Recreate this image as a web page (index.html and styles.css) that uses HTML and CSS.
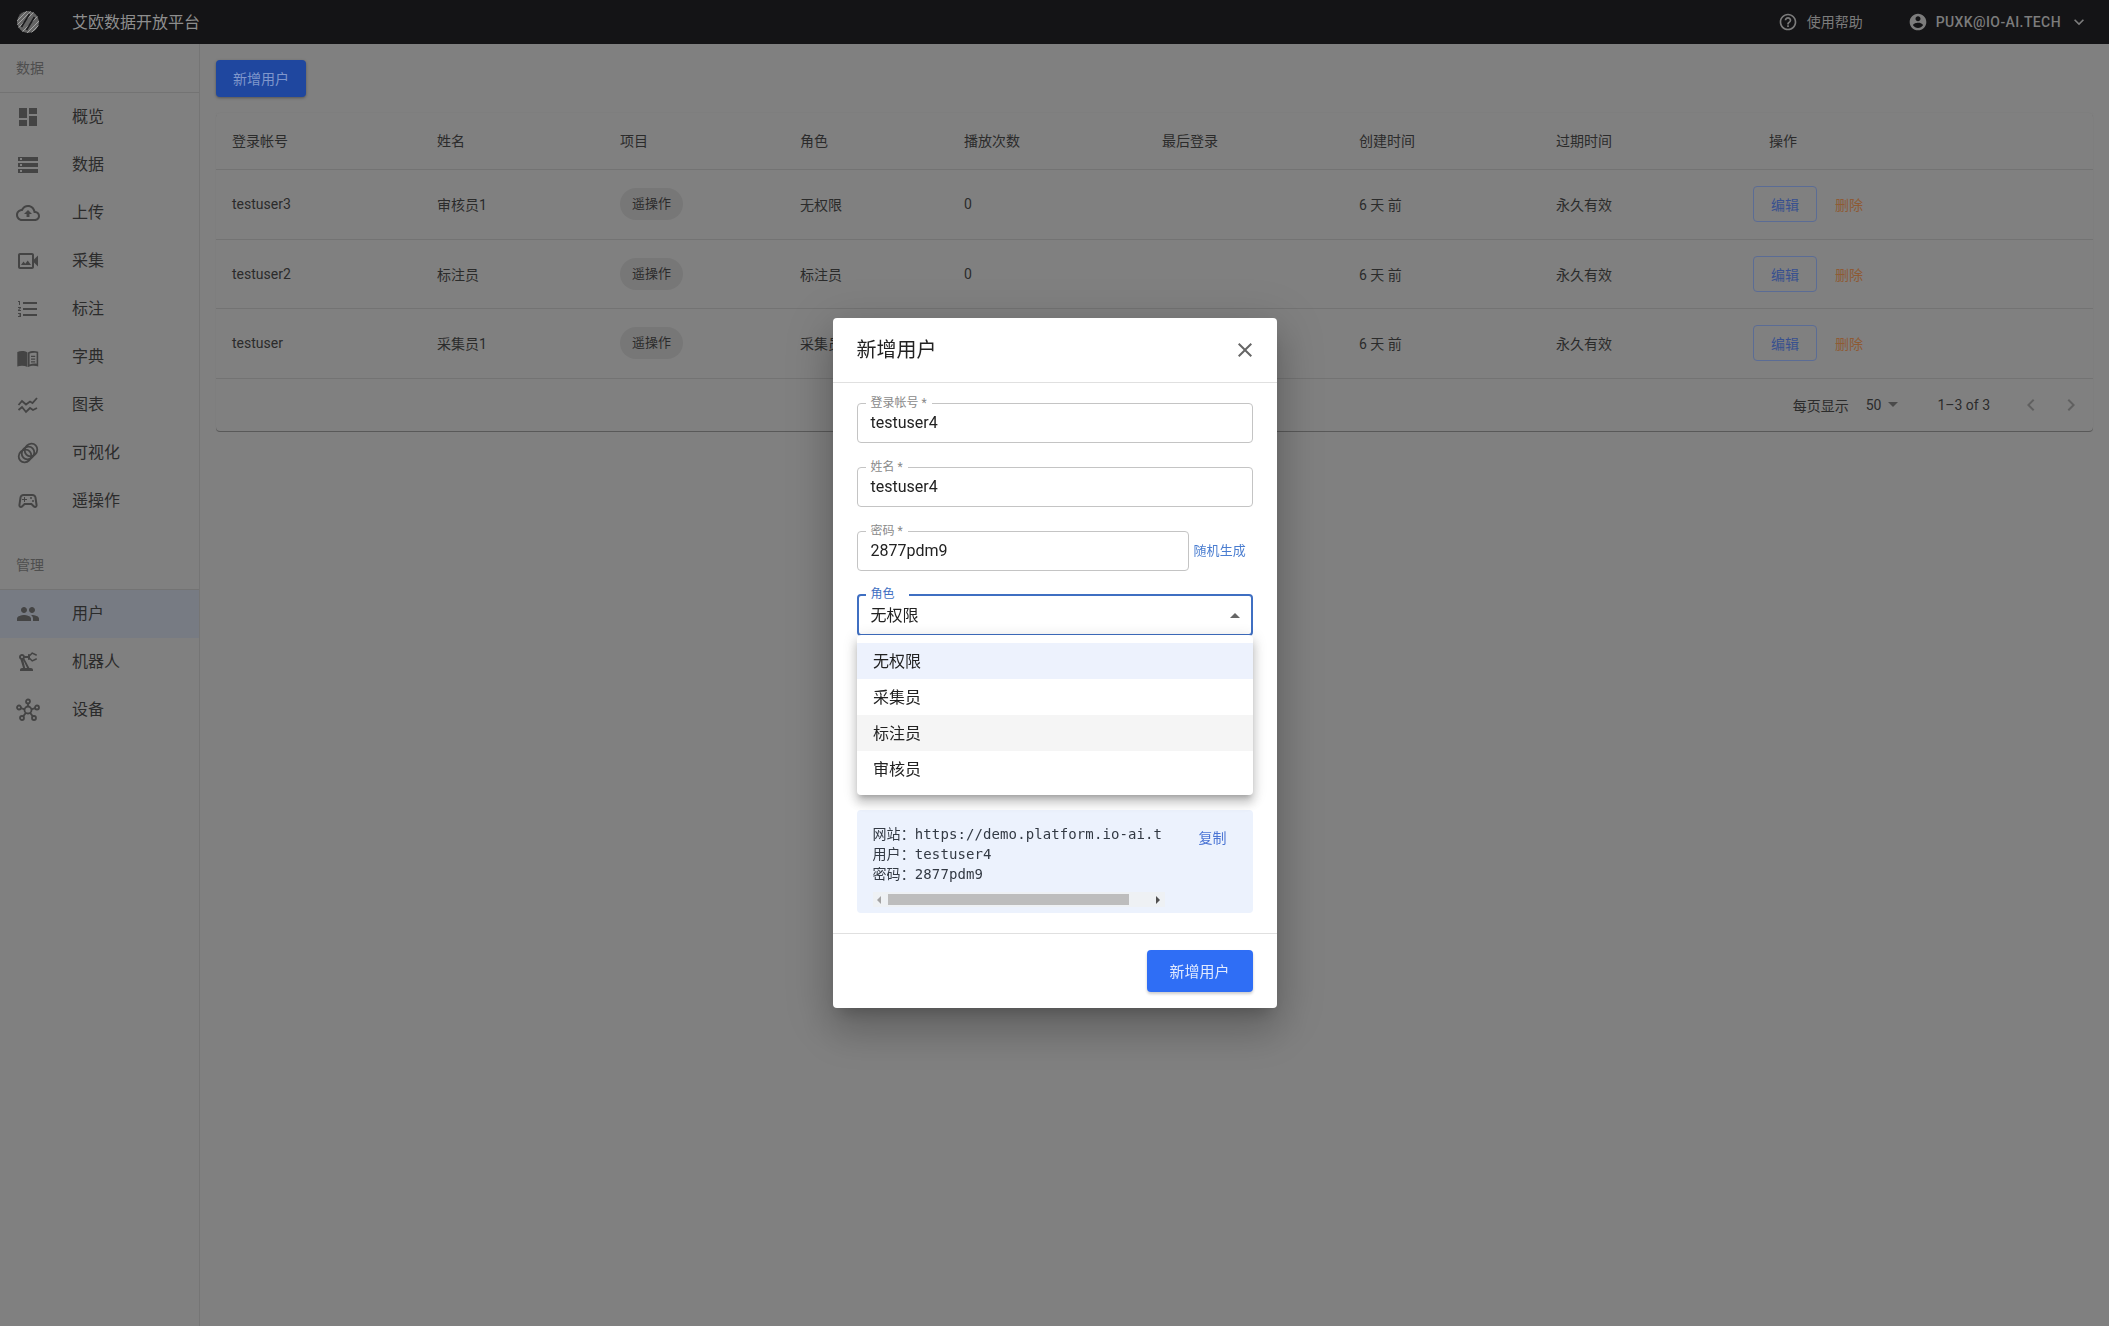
FILE: index.html
```html
<!DOCTYPE html>
<html lang="zh">
<head>
<meta charset="utf-8">
<title>艾欧数据开放平台</title>
<link rel="stylesheet" href="styles.css">
</head>
<body>
<header class="topbar">
  <svg class="logo" viewBox="0 0 22 22">
    <defs><clipPath id="lc"><circle cx="11" cy="11" r="11"/></clipPath></defs>
    <g clip-path="url(#lc)" stroke-width="1">
      <circle cx="11" cy="11" r="11" fill="#646464"/>
      <path d="M-4 10L10-4M-4 14L14-4M-4 18L18-4M-2 20L20-2M2 24L24 2M6 26L26 6M10 26L26 10" stroke="#a2a2a2"/>
      <path d="M4.500 16L12.500 3M9.500 19L17.500 6" stroke="#1c1c1e" stroke-width="1.600"/>
    </g>
  </svg>
  <span class="brand">艾欧数据开放平台</span>
  <div class="top-right">
    <div class="top-help">
      <svg class="ico20" viewBox="0 0 24 24"><path d="M11 18h2v-2h-2v2zm1-16C6.48 2 2 6.48 2 12s4.48 10 10 10 10-4.48 10-10S17.52 2 12 2zm0 18c-4.41 0-8-3.59-8-8s3.59-8 8-8 8 3.59 8 8-3.59 8-8 8zm0-14c-2.21 0-4 1.79-4 4h2c0-1.1.9-2 2-2s2 .9 2 2c0 2-3 1.75-3 5h2c0-2.25 3-2.5 3-5 0-2.21-1.79-4-4-4z"/></svg>
      <span>使用帮助</span>
    </div>
    <div class="top-user">
      <svg class="ico20" viewBox="0 0 24 24"><path d="M12 2C6.48 2 2 6.48 2 12s4.48 10 10 10 10-4.48 10-10S17.52 2 12 2zm0 3c1.66 0 3 1.34 3 3s-1.34 3-3 3-3-1.34-3-3 1.34-3 3-3zm0 14.2c-2.5 0-4.71-1.28-6-3.22.03-1.99 4-3.08 6-3.08 1.99 0 5.97 1.09 6 3.08-1.29 1.94-3.5 3.22-6 3.22z"/></svg>
      <span class="user-name">PUXK@IO-AI.TECH</span>
      <svg class="ico20" viewBox="0 0 24 24"><path d="M16.59 8.59L12 13.17 7.41 8.59 6 10l6 6 6-6z"/></svg>
    </div>
  </div>
</header>

<div class="shell">
  <nav class="sidebar">
    <div class="sub">数据</div>
    <a class="item"><svg class="ico" viewBox="0 0 24 24"><path d="M3 13h8V3H3v10zm0 8h8v-6H3v6zm10 0h8V11h-8v10zm0-18v6h8V3h-8z"/></svg><span>概览</span></a>
    <a class="item"><svg class="ico" viewBox="0 0 24 24"><path d="M2 20h20v-4H2v4zm2-3h2v2H4v-2zM2 4v4h20V4H2zm4 3H4V5h2v2zm-4 7h20v-4H2v4zm2-3h2v2H4v-2z"/></svg><span>数据</span></a>
    <a class="item"><svg class="ico" viewBox="0 0 24 24"><path d="M19.35 10.04C18.67 6.59 15.64 4 12 4 9.11 4 6.6 5.64 5.35 8.04 2.34 8.36 0 10.91 0 14c0 3.31 2.69 6 6 6h13c2.76 0 5-2.24 5-5 0-2.64-2.05-4.78-4.65-4.96zM19 18H6c-2.21 0-4-1.79-4-4 0-2.05 1.53-3.76 3.56-3.97l1.07-.11.5-.95C8.08 7.14 9.94 6 12 6c2.62 0 4.88 1.86 5.39 4.43l.3 1.5 1.53.11c1.56.1 2.78 1.41 2.78 2.96 0 1.65-1.35 3-3 3zM8 13h2.55v3h2.9v-3H16l-4-4z"/></svg><span>上传</span></a>
    <a class="item"><svg class="ico" viewBox="0 0 24 24"><path d="M18 10.48V6c0-1.1-.9-2-2-2H4c-1.1 0-2 .9-2 2v12c0 1.1.9 2 2 2h12c1.1 0 2-.9 2-2v-4.48l4 3.98v-11l-4 3.98zM16 18H4V6h12v12zM5 16h10l-3.25-4.5-2.5 3.25L7.5 12.5z"/></svg><span>采集</span></a>
    <a class="item"><svg class="ico" viewBox="0 0 24 24"><path d="M2 17h2v.5H3v1h1v.5H2v1h3v-4H2v1zm1-9h1V4H2v1h1v3zm-1 3h1.8L2 13.1v.9h3v-1H3.2L5 10.9V10H2v1zm5-6v2h14V5H7zm0 14h14v-2H7v2zm0-6h14v-2H7v2z"/></svg><span>标注</span></a>
    <a class="item"><svg class="ico" viewBox="0 0 24 24"><path d="M1.3 7c3.2-1.4 7-1.4 10.2.4V22c-3.2-1.5-7-1.5-10.2-.4z"/><path d="M12 7.4c3-1.7 7-1.7 10.2-.6v14.6c-3.2-1-7.2-.9-10.2.6zM13.6 8.6v10.8c2.2-.8 4.7-1 7-.6V8c-2.400-.4-4.900-.2-7 .6zM15 10.800h4.200v1.300H15zm0 2.700h4.200v1.300H15zm0 2.700h4.200v1.300H15z" fill-rule="evenodd"/></svg><span>字典</span></a>
    <a class="item"><svg class="ico" viewBox="0 0 24 24" fill="none"><path class="st" d="M2.500 12L6 8l4 3.500 4-3 2.500 1.500L21 5M2.500 17L6 14l4 5 4-4 3 2 4-2"/></svg><span>图表</span></a>
    <a class="item"><svg class="ico" viewBox="0 0 24 24" fill="none"><ellipse class="st" cx="9" cy="15" rx="6.600" ry="6" transform="rotate(-45 9 15)"/><ellipse class="st" cx="12" cy="12" rx="6.600" ry="6" transform="rotate(-45 12 12)"/><ellipse class="st" cx="15" cy="9" rx="6.600" ry="6" transform="rotate(-45 15 9)"/></svg><span>可视化</span></a>
    <a class="item"><svg class="ico" viewBox="0 0 24 24"><path d="M21.58 16.09l-1.09-7.66C20.21 6.46 18.52 5 16.53 5H7.47C5.48 5 3.79 6.46 3.51 8.43l-1.09 7.66C2.2 17.63 3.39 19 4.94 19c.68 0 1.32-.27 1.8-.75L9 16h6l2.25 2.25c.48.48 1.13.75 1.8.75 1.56 0 2.75-1.37 2.53-2.91zm-2.1.72c-.08.09-.21.19-.42.19-.15 0-.29-.06-.39-.16L15.83 14H8.17l-2.84 2.84c-.1.1-.24.16-.39.16-.21 0-.34-.1-.42-.19-.08-.09-.16-.23-.13-.44l1.09-7.66C5.63 7.74 6.48 7 7.47 7h9.06c.99 0 1.84.74 1.98 1.72l1.09 7.66c.03.2-.05.34-.12.43zM9 8H8v2H6v1h2v2h1v-2h2v-1H9V8z"/><circle cx="17" cy="12" r="1"/><circle cx="15" cy="9" r="1"/></svg><span>遥操作</span></a>

    <div class="sub sub-next">管理</div>
    <a class="item active"><svg class="ico" viewBox="0 0 24 24"><path d="M16 11c1.660 0 2.990-1.340 2.990-3S17.660 5 16 5c-1.660 0-3 1.340-3 3s1.340 3 3 3zm-8 0c1.660 0 2.990-1.340 2.990-3S9.660 5 8 5C6.340 5 5 6.340 5 8s1.340 3 3 3zm0 2c-2.330 0-7 1.170-7 3.500V19h14v-2.500c0-2.330-4.670-3.500-7-3.500zm8 0c-.29 0-.62.02-.97.05 1.160.84 1.970 1.970 1.970 3.450V19h6v-2.500c0-2.330-4.670-3.500-7-3.500z"/></svg><span>用户</span></a>
    <a class="item"><svg class="ico" viewBox="0 0 24 24"><path d="M19.930 8.350l-3.600 1.680L14 7.700V6.300l2.330-2.330 3.600 1.680c.38.18.82.01 1-.36.18-.38.01-.82-.36-1l-3.920-1.830c-.38-.18-.83-.1-1.130.2L13.780 4.400c-.18-.24-.46-.4-.78-.4-.55 0-1 .45-1 1v1H8.820C8.400 4.840 7.300 4 6 4 4.340 4 3 5.340 3 7c0 1.100.6 2.050 1.480 2.580L7.080 18H6c-1.100 0-2 .9-2 2v1h13v-1c0-1.100-.9-2-2-2h-1.620L8.410 8.770c.17-.24.31-.49.41-.77H12v1c0 .55.45 1 1 1 .32 0 .6-.16.78-.4l1.740 1.740c.3.3.75.38 1.130.2l3.920-1.830c.38-.18.54-.62.36-1-.18-.37-.62-.54-1-.36zM6 8c-.55 0-1-.45-1-1s.45-1 1-1 1 .45 1 1-.45 1-1 1zm5.110 10H9.170l-1.970-8h.01l3.900 8z"/></svg><span>机器人</span></a>
    <a class="item"><svg class="ico" viewBox="0 0 24 24" fill="none"><g class="st"><circle cx="12" cy="12" r="3.500"/><circle cx="12" cy="3.500" r="2"/><circle cx="3" cy="9.500" r="2"/><circle cx="21" cy="9.500" r="2"/><circle cx="6" cy="20" r="2"/><circle cx="18" cy="20" r="2"/><path d="M12 5.500v3M4.900 10.200l3.800 1.200M19.100 10.200l-3.800 1.200M7.200 18.400l2.700-3.600M16.800 18.400l-2.700-3.600"/></g></svg><span>设备</span></a>
  </nav>

  <main class="main">
    <button class="btn-add">新增用户</button>
    <section class="card">
      <table class="tbl">
        <colgroup>
          <col class="c1"><col class="c2"><col class="c3"><col class="c4"><col class="c5"><col class="c6"><col class="c7"><col class="c8"><col>
        </colgroup>
        <thead>
          <tr><th>登录帐号</th><th>姓名</th><th>项目</th><th>角色</th><th>播放次数</th><th>最后登录</th><th>创建时间</th><th>过期时间</th><th class="th-op">操作</th></tr>
        </thead>
        <tbody>
          <tr><td>testuser3</td><td>审核员1</td><td><span class="chip">遥操作</span></td><td>无权限</td><td>0</td><td></td><td>6 天 前</td><td>永久有效</td><td><div class="ops"><span class="edit">编辑</span><span class="del">删除</span></div></td></tr>
          <tr><td>testuser2</td><td>标注员</td><td><span class="chip">遥操作</span></td><td>标注员</td><td>0</td><td></td><td>6 天 前</td><td>永久有效</td><td><div class="ops"><span class="edit">编辑</span><span class="del">删除</span></div></td></tr>
          <tr><td>testuser</td><td>采集员1</td><td><span class="chip">遥操作</span></td><td>采集员</td><td>0</td><td></td><td>6 天 前</td><td>永久有效</td><td><div class="ops"><span class="edit">编辑</span><span class="del">删除</span></div></td></tr>
        </tbody>
      </table>
      <div class="pager">
        <span>每页显示</span>
        <span class="pg-size">50</span>
        <i class="pg-caret"></i>
        <span class="pg-range">1–3 of 3</span>
        <svg class="pg-nav" viewBox="0 0 24 24"><path d="M15.410 7.410L14 6l-6 6 6 6 1.410-1.410L10.830 12z"/></svg>
        <svg class="pg-nav" viewBox="0 0 24 24"><path d="M10 6L8.590 7.410 13.170 12l-4.580 4.580L10 18l6-6z"/></svg>
      </div>
    </section>
  </main>
</div>

<div class="backdrop">
  <div class="dialog">
    <div class="dlg-head">
      <h2>新增用户</h2>
      <svg class="dlg-close" viewBox="0 0 24 24"><path d="M19 6.410L17.590 5 12 10.590 6.410 5 5 6.410 10.590 12 5 17.590 6.410 19 12 13.410 17.590 19 19 17.590 13.410 12z"/></svg>
    </div>
    <div class="dlg-body">
      <div class="field"><label>登录帐号 *</label><span>testuser4</span></div>
      <div class="field"><label>姓名 *</label><span>testuser4</span></div>
      <div class="field-row">
        <div class="field grow"><label>密码 *</label><span>2877pdm9</span></div>
        <a class="gen">随机生成</a>
      </div>
      <div class="field focus">
        <label>角色</label><span>无权限</span><i class="up-caret"></i>
        <ul class="menu">
          <li class="sel">无权限</li>
          <li>采集员</li>
          <li class="hov">标注员</li>
          <li>审核员</li>
        </ul>
      </div>
      <div class="info">
        <div class="info-left">
          <pre class="creds">网站：https://demo.platform.io-ai.tech
用户：testuser4
密码：2877pdm9</pre>
          <div class="sbar"><i class="arr-l"></i><b class="thumb"></b><i class="arr-r"></i></div>
        </div>
        <a class="copy">复制</a>
      </div>
    </div>
    <div class="dlg-foot"><button class="btn-primary">新增用户</button></div>
  </div>
</div>
</body>
</html>
```

FILE: styles.css
```css
* { box-sizing: border-box; }
html, body { margin: 0; height: 100%; overflow: hidden; }
body {
  background: #808080;
  color: #2b2b2b;
  font-family: Roboto, "Noto Sans CJK SC", sans-serif;
  font-size: 14px;
}
button { font-family: inherit; border: 0; cursor: pointer; }

/* top bar */
.topbar {
  height: 44px;
  background: #141416;
  display: flex;
  align-items: center;
  padding: 0 20px 0 17px;
  color: #8c8c8c;
}
.logo { width: 22px; height: 22px; flex: none; }
.brand { font-size: 16px; margin: 0 0 2px 33px; color: #8e8e8e; }
.top-right { margin-left: auto; display: flex; align-items: center; gap: 45px; }
.top-help, .top-user { display: flex; align-items: center; }
.top-help span { margin: 0 0 2px 9px; color: #7c7c7c; }
.ico20 { width: 20px; height: 20px; fill: #7c7c7c; flex: none; }
.user-name { margin: 0 8px; font-weight: 500; color: #7c7c7c; letter-spacing: .4px; }

.shell { display: flex; height: calc(100vh - 44px); }

/* sidebar */
.sidebar { width: 200px; flex: none; border-right: 1px solid #757575; }
.sub {
  height: 49px;
  padding: 0 0 2px 16px;
  display: flex;
  align-items: center;
  border-bottom: 1px solid #737373;
  color: #4e4e4e;
}
.sub-next { margin-top: 16px; }
.item {
  height: 48px;
  display: flex;
  align-items: center;
  padding-left: 16px;
  font-size: 16px;
  color: #2b2b2b;
}
.item span { margin: 0 0 4px 32px; }
.item.active { background: #777b83; }
.ico { width: 24px; height: 24px; fill: #444; flex: none; }
.st { stroke: #444; stroke-width: 1.800; fill: none; }

/* main */
.main { flex: 1; padding: 16px; min-width: 0; }
.btn-add {
  display: block;
  width: 90px;
  height: 37px;
  padding: 0 0 2px;
  border-radius: 4px;
  background: #1f479f;
  color: #7f97cc;
  font-size: 14px;
  box-shadow: 0 1px 3px rgba(0,0,0,.35);
}
.card {
  margin-top: 16px;
  box-shadow: 0 1px 0 #595959, 0 0 1px #767676;
  border-radius: 4px;
}
.tbl { width: 100%; table-layout: fixed; border-collapse: separate; border-spacing: 0; }
.c1 { width: 205px; } .c2 { width: 183px; } .c3 { width: 180px; } .c4 { width: 164px; }
.c5 { width: 198px; } .c6 { width: 197px; } .c7 { width: 197px; } .c8 { width: 197px; }
.tbl th, .tbl td {
  padding: 0 16px;
  text-align: left;
  font-weight: 400;
  border-bottom: 1px solid #737373;
  white-space: nowrap;
}
.tbl th { height: 57px; padding-bottom: 3px; }
.tbl td { height: 69.500px; }
.tbl .th-op { padding-left: 32px; }
.chip {
  display: inline-flex;
  align-items: center;
  height: 32px;
  padding: 0 12px 3px;
  border-radius: 16px;
  background: #777;
  font-size: 13px;
}
.ops { display: flex; align-items: center; gap: 18px; }
.edit {
  width: 64px;
  height: 36px;
  display: flex;
  align-items: center;
  justify-content: center;
  border: 1px solid #5b6c95;
  border-radius: 4px;
  color: #38508f;
}
.del { color: #8f5a34; }
.pager {
  height: 52px;
  display: flex;
  align-items: center;
  justify-content: flex-end;
  padding-right: 10px;
}
.pg-size { margin-left: 17px; }
.pg-caret {
  margin-left: 7px;
  border: 5px solid transparent;
  border-top-color: #4a4a4a;
  border-bottom: 0;
}
.pg-range { margin-left: 39px; margin-right: 29px; }
.pg-nav { width: 24px; height: 24px; fill: #606060; }
.pg-nav + .pg-nav { margin-left: 16px; }

/* dialog */
.backdrop {
  position: fixed;
  inset: 0;
  display: flex;
  align-items: center;
  justify-content: center;
}
.dialog {
  width: 444px;
  height: 690px;
  background: #fff;
  border-radius: 4px;
  box-shadow: 0 11px 15px -7px rgba(0,0,0,.2), 0 24px 38px 3px rgba(0,0,0,.14), 0 9px 46px 8px rgba(0,0,0,.12);
  color: #222;
  display: flex;
  flex-direction: column;
}
.dlg-head {
  height: 65px;
  padding: 0 20px 0 24px;
  display: flex;
  align-items: center;
  justify-content: space-between;
  border-bottom: 1px solid #e0e0e0;
  flex: none;
}
.dlg-head h2 { margin: 0 0 3px; font-size: 20px; font-weight: 400; }
.dlg-close { width: 24px; height: 24px; fill: #666; }
.dlg-body {
  flex: 1;
  padding: 20px 24px 20px;
  display: flex;
  flex-direction: column;
  gap: 24px;
  border-bottom: 1px solid #e0e0e0;
}
.field {
  position: relative;
  height: 40px;
  border: 1px solid #c4c4c4;
  border-radius: 4px;
  padding: 0 0 2px 13px;
  display: flex;
  align-items: center;
  font-size: 16px;
  flex: none;
}
.field label {
  position: absolute;
  left: 8px;
  top: -9px;
  padding: 0 5px;
  background: #fff;
  font-size: 12px;
  line-height: 16px;
  color: #8a8a8a;
}
.field-row { display: flex; align-items: center; gap: 5px; }
.grow { width: 332px; }
.gen { margin-bottom: 3px; font-size: 13px; letter-spacing: .1px; color: #4a7dd0; white-space: nowrap; }
.focus { border: 2px solid #3f6fc2; height: 42px; margin-top: -1px; padding: 0 0 2px 12px; }
.focus label { color: #3f6fc2; left: 7px; top: -10px; padding: 0 14px 0 5px; }
.up-caret {
  position: absolute;
  right: 11px;
  top: 17px;
  border: 5px solid transparent;
  border-bottom-color: #666;
  border-top: 0;
}
.menu {
  position: absolute;
  left: -2px;
  right: -2px;
  top: 39px;
  margin: 0;
  padding: 8px 0;
  list-style: none;
  background: #fff;
  border-radius: 4px;
  box-shadow: 0 5px 5px -3px rgba(0,0,0,.2), 0 8px 10px 1px rgba(0,0,0,.14), 0 3px 14px 2px rgba(0,0,0,.12);
  z-index: 2;
}
.menu li { height: 36px; padding: 0 0 3px 16.500px; display: flex; align-items: center; }
.menu .sel { background: #edf2fd; }
.menu .hov { background: #f5f5f5; }
.info {
  margin-top: 150px;
  height: 103px;
  flex: none;
  background: #ecf2fd;
  border-radius: 4px;
  padding: 14px 16px 0;
  display: flex;
}
.info-left { width: 292px; flex: none; }
.creds {
  margin: 0;
  width: 290px;
  overflow: hidden;
  font-family: "DejaVu Sans Mono", "Noto Sans CJK SC", monospace;
  font-size: 14px;
  letter-spacing: .1px;
  line-height: 20px;
  color: #333a44;
}
.sbar {
  margin-top: 8px;
  height: 15px;
  background: #eef1f4;
  display: flex;
  align-items: center;
  position: relative;
}
.thumb { position: absolute; left: 15px; width: 241px; top: 2px; height: 11px; background: #bdbdbd; }
.arr-l {
  position: absolute; left: 4px; top: 4px;
  border: 4px solid transparent; border-right-color: #a3a3a3; border-left: 0;
}
.arr-r {
  position: absolute; right: 5px; top: 4px;
  border: 4px solid transparent; border-left-color: #505050; border-right: 0;
}
.copy { margin: 4px 0 0 34px; line-height: 20px; color: #4a74d4; white-space: nowrap; }
.dlg-foot {
  height: 74px;
  flex: none;
  padding: 16px 24px;
  display: flex;
  justify-content: flex-end;
}
.btn-primary {
  width: 106px;
  height: 42px;
  padding: 0 0 2px;
  border-radius: 4px;
  background: #2f6ef5;
  color: #dfe9ff;
  font-size: 15px;
  box-shadow: 0 2px 3px rgba(0,0,0,.2);
}
```
